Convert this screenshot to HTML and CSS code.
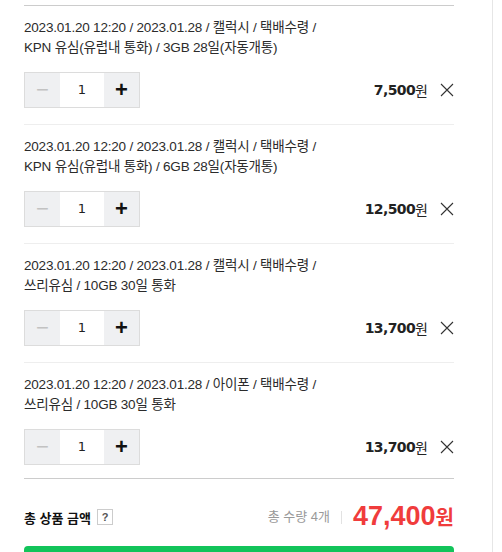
FILE: index.html
```html
<!DOCTYPE html>
<html lang="ko">
<head>
    <meta charset="UTF-8" />
    <meta name="viewport" content="width=device-width, initial-scale=1.0"/>
    <title>장바구니</title>
    <link rel="stylesheet" href="styles.css">
</head>
<body>
    <div class="panel">
        <div class="cart">
            <ul class="cart-list">
                <li class="cart-item">
                    <p class="option">
                        2023.01.20 12:20 / 2023.01.28 / 캘럭시 / 택배수령 /<br>
                        KPN 유심(유럽내 통화) / 3GB 28일(자동개통)
                    </p>
                    <div class="item-row">
                        <div class="qty">
                            <button class="qty-btn minus" type="button">&minus;</button>
                            <span class="qty-num">1</span>
                            <button class="qty-btn plus" type="button">+</button>
                        </div>
                        <div class="item-price">
                            <strong>7,500</strong>원
                            <button class="remove" type="button" aria-label="삭제">
                                <svg width="14" height="14" viewBox="0 0 14 14"><path d="M1 1L13 13M13 1L1 13" stroke="#333" stroke-width="1.1" fill="none"/></svg>
                            </button>
                        </div>
                    </div>
                </li>
                <li class="cart-item">
                    <p class="option">
                        2023.01.20 12:20 / 2023.01.28 / 캘럭시 / 택배수령 /<br>
                        KPN 유심(유럽내 통화) / 6GB 28일(자동개통)
                    </p>
                    <div class="item-row">
                        <div class="qty">
                            <button class="qty-btn minus" type="button">&minus;</button>
                            <span class="qty-num">1</span>
                            <button class="qty-btn plus" type="button">+</button>
                        </div>
                        <div class="item-price">
                            <strong>12,500</strong>원
                            <button class="remove" type="button" aria-label="삭제">
                                <svg width="14" height="14" viewBox="0 0 14 14"><path d="M1 1L13 13M13 1L1 13" stroke="#333" stroke-width="1.1" fill="none"/></svg>
                            </button>
                        </div>
                    </div>
                </li>
                <li class="cart-item">
                    <p class="option">
                        2023.01.20 12:20 / 2023.01.28 / 캘럭시 / 택배수령 /<br>
                        쓰리유심 / 10GB 30일 통화
                    </p>
                    <div class="item-row">
                        <div class="qty">
                            <button class="qty-btn minus" type="button">&minus;</button>
                            <span class="qty-num">1</span>
                            <button class="qty-btn plus" type="button">+</button>
                        </div>
                        <div class="item-price">
                            <strong>13,700</strong>원
                            <button class="remove" type="button" aria-label="삭제">
                                <svg width="14" height="14" viewBox="0 0 14 14"><path d="M1 1L13 13M13 1L1 13" stroke="#333" stroke-width="1.1" fill="none"/></svg>
                            </button>
                        </div>
                    </div>
                </li>
                <li class="cart-item">
                    <p class="option">
                        2023.01.20 12:20 / 2023.01.28 / 아이폰 / 택배수령 /<br>
                        쓰리유심 / 10GB 30일 통화
                    </p>
                    <div class="item-row">
                        <div class="qty">
                            <button class="qty-btn minus" type="button">&minus;</button>
                            <span class="qty-num">1</span>
                            <button class="qty-btn plus" type="button">+</button>
                        </div>
                        <div class="item-price">
                            <strong>13,700</strong>원
                            <button class="remove" type="button" aria-label="삭제">
                                <svg width="14" height="14" viewBox="0 0 14 14"><path d="M1 1L13 13M13 1L1 13" stroke="#333" stroke-width="1.1" fill="none"/></svg>
                            </button>
                        </div>
                    </div>
                </li>
            </ul>

            <div class="total">
                <div class="total-label">
                    총 상품 금액
                    <span class="help">?</span>
                </div>
                <div class="total-sum">
                    <span class="total-count">총 수량 4개</span>
                    <span class="divider"></span>
                    <span class="total-price"><strong>47,400</strong>원</span>
                </div>
            </div>

            <button class="buy-btn" type="button">구매하기</button>
        </div>
    </div>
</body>
</html>
```

FILE: styles.css
```css
body {
    margin: 0;
    padding: 0;
    font-family: 'Liberation Sans', 'Noto Sans CJK KR', sans-serif;
    color: #333;
    background-color: #fff;
}

.panel {
    width: 492px;
    height: 100vh;
    border-right: 1px solid #e6e6e6;
    overflow: hidden;
}

.cart {
    width: 430px;
    padding: 0 0 0 24px;
}

.cart-list {
    list-style: none;
    margin: 5px 0 0;
    padding: 0;
    border-top: 1px solid #ccc;
    border-bottom: 1px solid #ccc;
}

.cart-item {
    padding: 12px 0 16px;
    border-bottom: 1px solid #eee;
}

.cart-item:last-child {
    padding-bottom: 13px;
    border-bottom: 0;
}

.option {
    margin: 0;
    font-size: 13.5px;
    line-height: 20px;
    letter-spacing: -0.2px;
    color: #2b2b2b;
}

.item-row {
    display: flex;
    align-items: center;
    justify-content: space-between;
    margin-top: 14px;
}

.qty {
    display: flex;
    border: 1px solid #dcdcdc;
    height: 34px;
}

.qty-btn {
    width: 35px;
    height: 34px;
    padding: 0;
    border: 0;
    background-color: #eff0f2;
    font-family: 'Liberation Sans', sans-serif;
    font-size: 22px;
    line-height: 34px;
    cursor: pointer;
}

.qty-btn.minus {
    color: #c2c2c2;
}

.qty-btn.plus {
    color: #111;
    font-weight: bold;
}

.qty-num {
    width: 44px;
    text-align: center;
    line-height: 34px;
    font-family: 'DejaVu Sans', sans-serif;
    font-size: 13px;
    color: #222;
    background-color: #fff;
}

.item-price {
    display: flex;
    align-items: center;
    font-size: 14px;
    color: #222;
}

.item-price strong {
    font-family: 'DejaVu Sans', sans-serif;
    font-size: 14px;
    letter-spacing: -0.6px;
}

.remove {
    width: 14px;
    height: 14px;
    margin-left: 12px;
    padding: 0;
    border: 0;
    background: none;
    cursor: pointer;
    display: flex;
}

.total {
    display: flex;
    align-items: center;
    justify-content: space-between;
    height: 24px;
    padding: 26px 0 17px;
}

.total-label {
    display: flex;
    align-items: center;
    font-size: 13px;
    font-weight: bold;
    color: #111;
}

.help {
    display: inline-block;
    width: 14px;
    height: 14px;
    margin-left: 6px;
    border: 1px solid #ccc;
    font-size: 11px;
    line-height: 14px;
    text-align: center;
    color: #555;
}

.total-sum {
    display: flex;
    align-items: center;
    line-height: 24px;
}

.total-count {
    font-size: 13px;
    color: #999;
}

.divider {
    width: 1px;
    height: 13px;
    margin: 0 11px;
    background-color: #e2e2e2;
}

.total-price {
    color: #f03c3c;
    font-size: 20px;
    font-weight: bold;
    line-height: 24px;
}

.total-price strong {
    font-size: 27px;
}

.buy-btn {
    display: block;
    width: 100%;
    height: 60px;
    border: 0;
    border-radius: 4px;
    background-color: #12c45a;
    color: #fff;
    font-family: inherit;
    font-size: 16px;
    font-weight: bold;
}
```
